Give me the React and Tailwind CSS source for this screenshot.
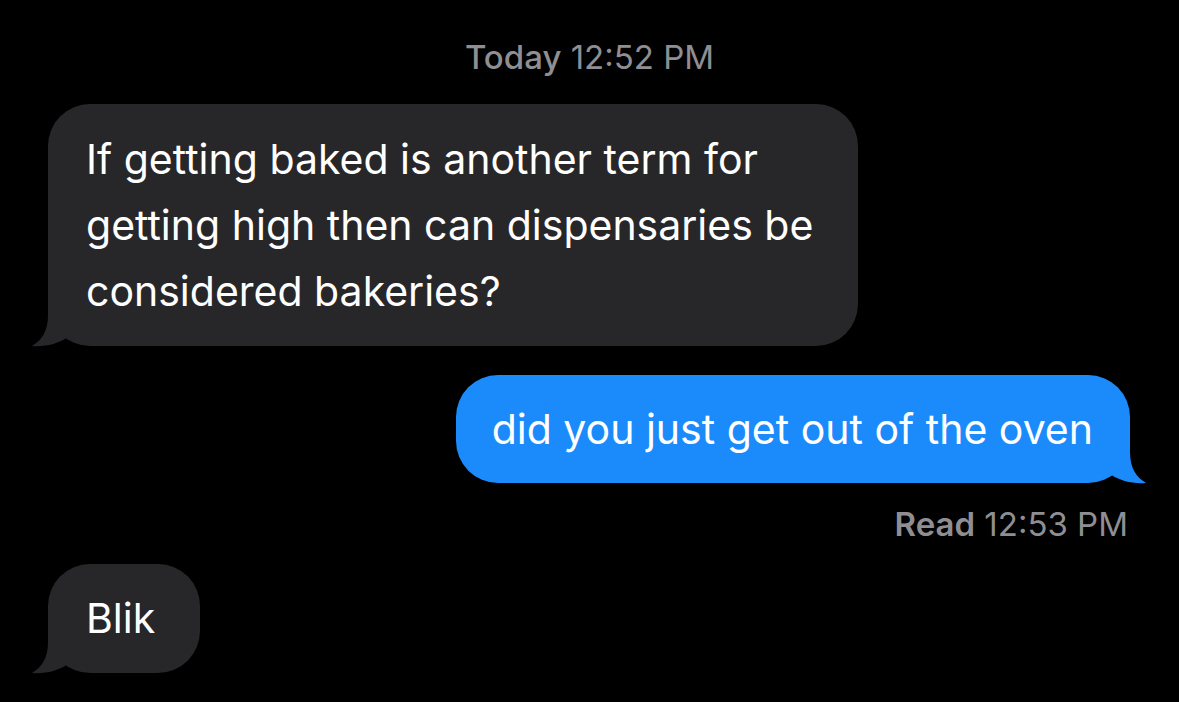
import React from "react";

const font = { fontFamily: "Inter, 'Noto Sans', sans-serif" };

function Tail({ color, side }) {
  const pos = side === "left" ? "left-[-18px]" : "right-[-18px] -scale-x-100";
  return (
    <svg
      className={`absolute bottom-[-1px] ${pos}`}
      width="44"
      height="48"
      viewBox="0 0 44 48"
    >
      <path d="M18 4 L18 16 C18 32 12 41 2 47 C15 48 28 45 38 38 L42 4 Z" fill={color} />
    </svg>
  );
}

function Bubble({ children, color, side, className = "" }) {
  return (
    <div
      className={`relative rounded-[42px] px-[38px] py-[21px] text-[41px] leading-[66px] text-white ${className}`}
      style={{ backgroundColor: color }}
    >
      <Tail color={color} side={side} />
      <span className="relative">{children}</span>
    </div>
  );
}

export default function App() {
  return (
    <div className="h-[702px] w-[1179px] overflow-hidden bg-black" style={font}>
      <div className="flex flex-col pt-[37px]">
        <div className="text-center text-[33px] leading-[40px] text-[#8e8e93]">
          <span className="font-medium">Today</span> 12:52 PM
        </div>
        <div className="ml-[48px] mt-[27px] flex">
          <Bubble color="#27272a" side="left" className="w-[810px] py-[22px]">
            If getting baked is another term for
            <br />
            getting high then can dispensaries be
            <br />
            considered bakeries?
          </Bubble>
        </div>
        <div className="mr-[49px] mt-[29px] flex justify-end">
          <Bubble color="#1b8bfc" side="right" className="pl-[36px] pr-[37px]">
            did you just get out of the oven
          </Bubble>
        </div>
        <div className="mr-[51px] mt-[21px] text-right text-[33px] leading-[40px] text-[#8e8e93]">
          <span className="font-semibold">Read</span> 12:53 PM
        </div>
        <div className="ml-[48px] mt-[20px] flex">
          <Bubble color="#27272a" side="left" className="pr-[45px] pb-[22px]">
            Blik
          </Bubble>
        </div>
      </div>
    </div>
  );
}
